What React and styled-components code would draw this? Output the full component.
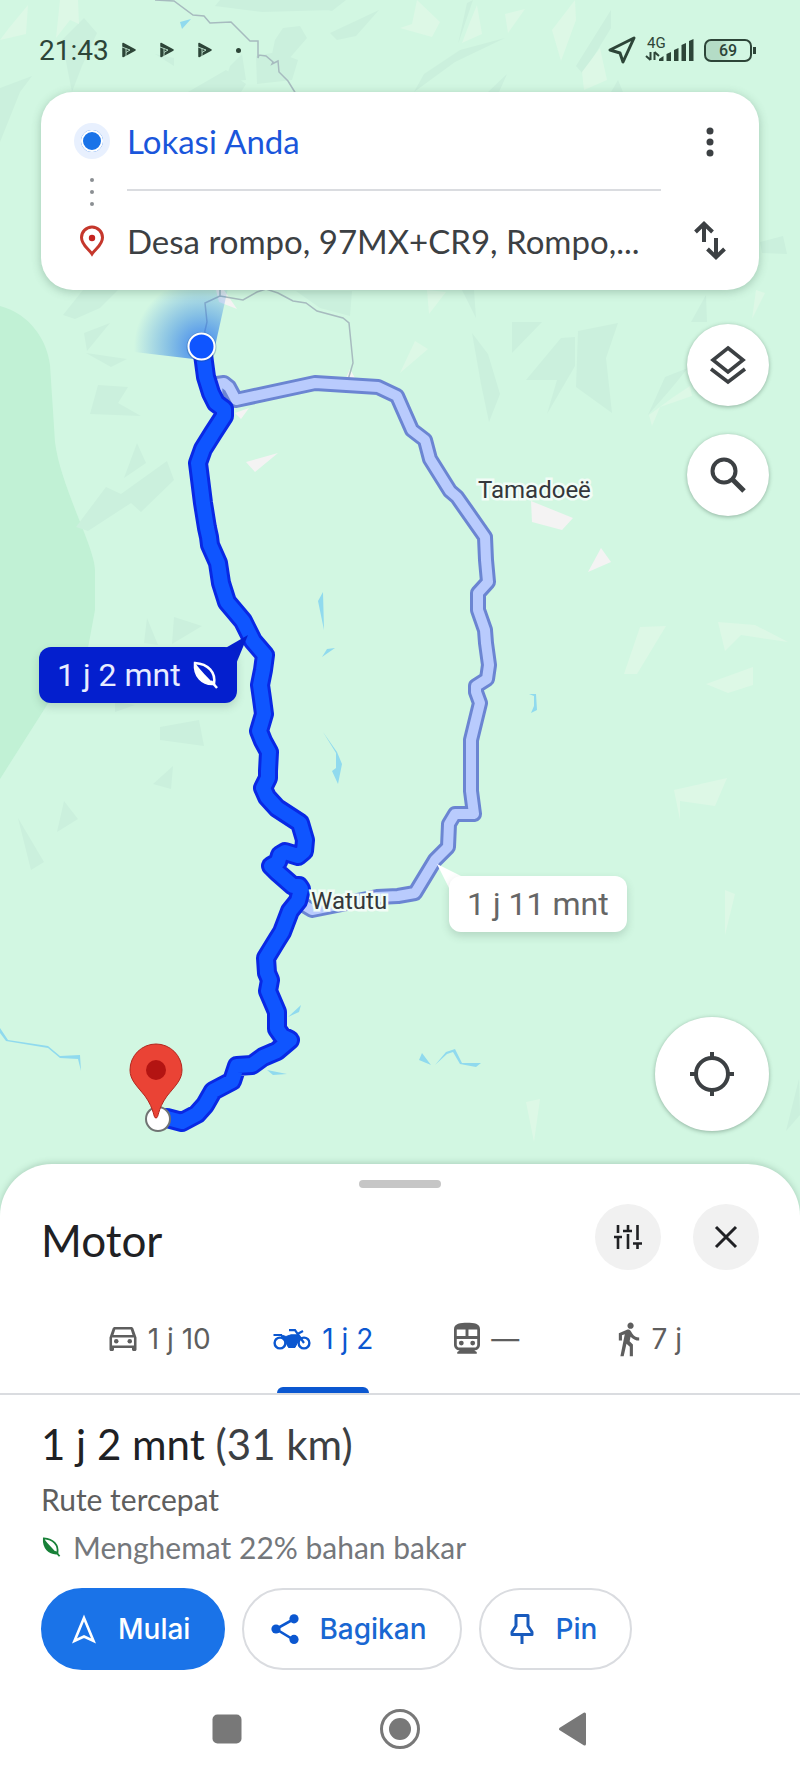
import styled, { createGlobalStyle, css } from 'styled-components';

const modes = [
  { id: 'car', label: 'Mobil', time: '1 j 10', icon: <CarIcon /> },
  { id: 'motor', label: 'Motor', time: '1 j 2', icon: <MotorIcon />, active: true },
  { id: 'transit', label: 'Transportasi umum', time: '—', icon: <TransitIcon /> },
  { id: 'walk', label: 'Jalan kaki', time: '7 j', icon: <WalkIcon /> },
];

const mainRoute =
  'M202 347L204 362L206 377L211 393L216 403L224 409L224 416L213 433L203 449L198 463L203 503L207 528L209 537L210 545L218 563L221 583L227 602L243 621L253 641L265 655L263 670L260 685L262 699L264 714L259 731L263 741L269 752L268 771L268 778L263 788L267 797L277 808L300 823L305 840L304 851L298 856L285 852L280 855L278 862L271 866L277 872L293 886L299 886L301 889L298 901L290 911L282 932L277 940L266 958L267 973L270 980L268 991L277 1012L277 1029L282 1036L290 1040L277 1051L263 1057L252 1065L237 1066L232 1081L213 1091L205 1105L197 1114L182 1122L167 1118';

const otherRoute =
  'M218 405L217 384L224 383L229 387L236 400L315 383L378 387L397 396L412 430L425 440L430 459L450 491L457 497L485 537L486 560L488 582L478 593L478 610L485 630L486 643L489 665L487 679L476 686L476 692L480 703L471 740L471 791L474 814L455 814L449 824L448 847L435 860L415 893L398 896L377 897L312 910L302 904';

const terrain = {
  dark: [
    'M220 0H338L332 10L262 12L215 6Z',
    'M280 0L346 0L332 11Z',
    'M283 28L300 26L307 38L288 60L272 54L275 40Z',
    'M330 33L362 18L379 10L356 36L337 40Z',
    'M256 56L277 52L298 60L292 80L257 84Z',
    'M242 54L246 80L225 82L230 66Z',
    'M188 92L226 70L246 84L241 92Z',
    'M62 40L84 18L97 33L82 66L72 92L68 72Z',
    'M155 54L174 58L174 66Z',
    'M0 88L32 76L20 92L0 142Z',
    'M424 74L460 50L505 38L455 62L414 92Z',
    'M458 44L467 3L473 0Z',
    'M576 66L611 10L611 28L583 74Z',
    'M488 92L507 74L499 92Z',
    'M611 92L618 80L623 92Z',
    'M760 242L783 236L787 254L762 253Z',
    'M83 290L118 290L100 308L75 319L63 315Z',
    'M84 333L110 323L87 351Z',
    'M86 353L127 359L111 367Z',
    'M98 385L128 387L118 403L141 416L90 414Z',
    'M137 443L146 463L124 478Z',
    'M106 487L121 494L167 461L174 480L141 512L131 503L88 531L76 527Z',
    'M147 618L158 645L144 643Z',
    'M174 617L202 626L172 644Z',
    'M296 291L352 291L350 316L320 308Z',
    'M462 290L474 290L476 318Z',
    'M512 322L542 322L512 353Z',
    'M472 333L488 354L500 394L489 422L481 384Z',
    'M561 338L575 337L575 366L547 414L557 380L526 380Z',
    'M578 331L618 323L606 358L612 413L576 387Z',
    'M706 295L707 322L691 322Z',
    'M665 377L688 368L670 390L648 415Z',
    'M160 727L199 720L204 746L160 740Z',
    'M153 784L173 766L171 789Z',
    'M64 801L78 819L57 832Z',
    'M18 818L44 862L31 870Z',
    'M115 702L135 705L115 712Z',
    'M799 1079L786 1131L800 1115Z',
  ],
  light: [
    'M9 28L28 5L26 34L0 40Z',
    'M60 0L78 0L79 24L70 20L56 38Z',
    'M400 28L412 24L417 0L440 22L432 37Z',
    'M505 14L525 9L508 33Z',
    'M552 30L575 0L576 20L561 61Z',
    'M470 22L477 5L482 34L462 43Z',
    'M582 72L600 48L607 80L584 90Z',
    'M427 290L446 292L429 314Z',
    'M415 341L428 349L400 373Z',
    'M756 290L765 293L752 319Z',
    'M672 398L690 386L692 396L660 407L652 426L649 415Z',
    'M640 627L666 626L637 674L624 674Z',
    'M718 622L755 625L788 642L741 635L725 651Z',
    'M706 684L753 667L753 685L728 693Z',
    'M674 790L727 778L715 806L680 801L680 820Z',
    'M725 890L735 894L725 935Z',
    'M526 1102L540 1099L534 1142Z',
  ],
  town: [
    'M246 462L278 453L255 472Z',
    'M235 413L249 408L241 419Z',
    'M216 290L224 290L237 309L219 302Z',
    'M531 501L532 522L562 530L573 518Z',
    'M601 548L611 562L588 572Z',
    'M346 378L350 369L355 378Z',
  ],
  water: [
    'M180 22L191 19L182 29Z',
    'M318 601L323 592L324 630Z',
    'M322 657L327 649L335 648Z',
    'M323 732L337 752L342 764L338 784L332 771L336 768L336 753Z',
    'M529 694L536 694L537 710L531 713L534 706L534 696Z',
    'M288 1017L301 1005L299 1012Z',
    'M267 1070L287 1074L273 1075Z',
    'M0 1028L8 1040L48 1046L60 1056L80 1055L81 1071L78 1059L60 1058L48 1048L6 1041L0 1033Z',
    'M419 1060L422 1053L431 1065Z',
    'M435 1065L446 1052L455 1049L462 1063L481 1063L476 1067L460 1064L453 1052L447 1054Z',
  ],
};

export default function App() {
  return (
    <Screen>
      <GlobalStyle />
      <MapArea>
        <RouteMap />
        <StatusBar>
          <Clock>21:43</Clock>
          <Notices>
            <AppMark />
            <AppMark />
            <AppMark />
            <Dot $size="5px" $color="#2d4538" />
          </Notices>
          <Signals>
            <SignalIcons />
            <Battery>69</Battery>
          </Signals>
        </StatusBar>
        <StopsCard>
          <Markers>
            <StartMarker />
            <Trail>
              <Dot $size="4px" $color="#8b8f93" />
              <Dot $size="4px" $color="#8b8f93" />
              <Dot $size="4px" $color="#8b8f93" />
            </Trail>
            <PlaceIcon />
          </Markers>
          <Fields>
            <StopInput $start aria-label="Titik awal" defaultValue="Lokasi Anda" />
            <StopInput aria-label="Tujuan" defaultValue="Desa rompo, 97MX+CR9, Rompo,..." />
          </Fields>
          <CardActions>
            <PlainButton aria-label="Opsi lainnya">
              <svg width="8" height="30" viewBox="0 0 8 30" fill="#3c4043">
                <circle cx="4" cy="4" r="3.5" />
                <circle cx="4" cy="15" r="3.5" />
                <circle cx="4" cy="26" r="3.5" />
              </svg>
            </PlainButton>
            <PlainButton aria-label="Tukar titik awal dan tujuan">
              <svg width="32" height="40" viewBox="0 0 32 40" fill="none" stroke="#3c4043" strokeWidth="4">
                <path d="M10 21V3M1.5 11L10 2.8L18.5 11M22 17V36M13.5 28L22 36.2L30.5 28" />
              </svg>
            </PlainButton>
          </CardActions>
        </StopsCard>
        <MapControls>
          <RoundButton aria-label="Lapisan peta">
            <svg width="38" height="40" viewBox="0 0 38 40" fill="none" stroke="#3c4043" strokeWidth="3.6">
              <path d="M19 3L34 15L19 27L4 15Z" />
              <path d="M2 24L19 37L36 24" />
            </svg>
          </RoundButton>
          <RoundButton aria-label="Telusuri">
            <svg width="38" height="38" viewBox="0 0 38 38" fill="none" stroke="#3c4043" strokeWidth="4">
              <circle cx="15" cy="15" r="11.5" />
              <path d="M23 23L35 35" strokeWidth="5" />
            </svg>
          </RoundButton>
          <RoundButton $large aria-label="Lokasi saya">
            <svg width="46" height="46" viewBox="0 0 46 46" fill="none" stroke="#3c4043" strokeWidth="4">
              <circle cx="23" cy="23" r="16" />
              <path d="M23 1V8M23 38V45M1 23H8M38 23H45" />
            </svg>
          </RoundButton>
        </MapControls>
      </MapArea>

      <Sheet>
        <Handle />
        <SheetHeader>
          <Title>Motor</Title>
          <HeaderButton aria-label="Opsi rute">
            <svg width="28" height="26" viewBox="0 0 28 26" fill="none" stroke="#202124" strokeWidth="2.6">
              <path d="M4 1V9M0 13H8M4 13V25M14 1V7M9 7H18M14 10V25M23.5 1V16M19 19.5H28M23.5 19.5V25" />
            </svg>
          </HeaderButton>
          <HeaderButton aria-label="Tutup">
            <svg width="24" height="24" viewBox="0 0 24 24" fill="none" stroke="#202124" strokeWidth="3">
              <path d="M2 2L22 22M22 2L2 22" />
            </svg>
          </HeaderButton>
        </SheetHeader>
        <Tabs role="tablist">
          {modes.map((mode) => (
            <Tab key={mode.id} role="tab" title={mode.label} aria-selected={!!mode.active} $active={mode.active}>
              {mode.icon}
              {mode.time}
            </Tab>
          ))}
        </Tabs>
        <Summary>
          <Duration>
            1 j 2 mnt <span>(31 km)</span>
          </Duration>
          <Note>Rute tercepat</Note>
          <Note $pale>
            <LeafIcon size={20} color="#188038" />
            Menghemat 22% bahan bakar
          </Note>
        </Summary>
        <Actions>
          <ActionButton $primary>
            <svg width="28" height="30" viewBox="0 0 28 30" fill="none" stroke="#fff" strokeWidth="2.6">
              <path d="M14 4L23.5 27L14 22.5L4.5 27Z" />
            </svg>
            Mulai
          </ActionButton>
          <ActionButton>
            <svg width="28" height="30" viewBox="0 0 28 30" fill="#0b57d0">
              <path d="M23 5L5 15L23 26" fill="none" stroke="#0b57d0" strokeWidth="2.6" />
              <circle cx="23" cy="4.8" r="4.6" />
              <circle cx="5" cy="15" r="4.6" />
              <circle cx="23" cy="25.4" r="4.6" />
            </svg>
            Bagikan
          </ActionButton>
          <ActionButton>
            <svg width="28" height="30" viewBox="0 0 28 30" fill="none" stroke="#185abc" strokeWidth="3">
              <path d="M8 1.5H20V12L24 18V20.5H4V18L8 12ZM14 20V30" strokeLinejoin="round" />
            </svg>
            Pin
          </ActionButton>
        </Actions>
        <SystemNav>
          <PlainButton aria-label="Terbaru">
            <svg width="42" height="42" viewBox="0 0 42 42">
              <rect x="6.5" y="6.5" width="29" height="29" rx="5" fill="#787878" />
            </svg>
          </PlainButton>
          <PlainButton aria-label="Layar utama">
            <svg width="42" height="42" viewBox="0 0 42 42">
              <circle cx="21" cy="21" r="18.5" fill="none" stroke="#787878" strokeWidth="3" />
              <circle cx="21" cy="21" r="11" fill="#787878" />
            </svg>
          </PlainButton>
          <PlainButton aria-label="Kembali">
            <svg width="42" height="42" viewBox="0 0 42 42" fill="#787878" stroke="#787878" strokeWidth="3" strokeLinejoin="round">
              <path d="M8.5 21L32.5 6V36Z" />
            </svg>
          </PlainButton>
        </SystemNav>
      </Sheet>
    </Screen>
  );
}

function RouteMap() {
  return (
    <MapCanvas>
      <svg width="800" height="1220" viewBox="0 0 800 1220" fill="none" aria-hidden="true">
        <defs>
          <radialGradient id="beam" gradientUnits="userSpaceOnUse" cx="202" cy="347" r="68">
            <stop offset="0" stopColor="#1a66f5" stopOpacity="0.8" />
            <stop offset="0.5" stopColor="#1a73e8" stopOpacity="0.4" />
            <stop offset="1" stopColor="#1a73e8" stopOpacity="0" />
          </radialGradient>
        </defs>
        <path
          d="M0 306C30 314 47 340 50 365L55 442C60 485 95 548 95 570V610L88 648L47 705L0 779Z"
          fill="#c1f1d5"
        />
        <path d={terrain.dark.join('')} fill="#cbf0dd" />
        <path d={terrain.light.join('')} fill="#ddf8e6" />
        <path d={terrain.town.join('')} fill="#f4f3f3" />
        <path d={terrain.water.join('')} fill="#90daee" />
        <path
          d="M155 0L174 1L193 15L204 16L210 23L231 22L250 41H258V58L259 55L266 56L273 62L272 64L278 61L279 72L288 81L296 94M220 285V296L205 303L207 322L204 335M220 296L243 300L257 292L266 289L278 293L293 301L306 303L317 311L343 318L349 323L353 363L348 380"
          stroke="#a7bbbf"
          strokeWidth="1.5"
        />
        <path d="M202 360L126 351V270H232L212 360Z" fill="url(#beam)" />
        <g strokeLinejoin="round" strokeLinecap="round">
          <path d={otherRoute} stroke="#6b85d2" strokeWidth="16" />
          <path d={otherRoute} stroke="#b9cbfd" strokeWidth="10" />
          <path d={mainRoute} stroke="#0928e4" strokeWidth="20" />
          <path d={mainRoute} stroke="#0f55ff" strokeWidth="14" />
        </g>
        <circle cx="201.5" cy="347" r="15" fill="#1b4a80" opacity="0.3" />
        <circle cx="201.5" cy="346.5" r="13" fill="#0f55ff" stroke="#fff" strokeWidth="2" />
        <circle cx="158" cy="1119" r="12" fill="#fff" stroke="#707473" strokeWidth="2" />
        <path
          d="M156 1118C153 1118 155 1110 145 1096C137 1086 130 1080 130 1070A26 26 0 0 1 182 1070C182 1080 175 1086 167 1096C157 1110 159 1118 156 1118Z"
          fill="#ea4335"
          stroke="#b3261e"
        />
        <circle cx="156" cy="1070" r="10" fill="#b31412" />
        <path d="M222 650L248 635L236 664Z" fill="#041fce" />
        <path d="M465 878L437 864L451 892Z" fill="#fff" />
      </svg>
      <PlaceName $x="478px" $y="475px">Tamadoeë</PlaceName>
      <PlaceName $x="311px" $y="886px">Watutu</PlaceName>
      <Callout $x="39px" $y="647px" $selected>
        1 j 2 mnt
        <LeafIcon size={28} color="#fff" />
      </Callout>
      <Callout $x="449px" $y="876px">1 j 11 mnt</Callout>
    </MapCanvas>
  );
}

function AppMark() {
  return (
    <svg width="14" height="16" viewBox="0 0 14 16">
      <path d="M1 1.500L13 8L1 14.500Z" fill="#2d4538" stroke="#2d4538" strokeWidth="1.500" strokeLinejoin="round" />
      <path d="M0 5L8 8L4 10.500V15M4 10.500V6.500" fill="none" stroke="#d2f7e2" strokeWidth="0.8" />
    </svg>
  );
}

function SignalIcons() {
  return (
    <svg width="86" height="32" viewBox="0 0 86 32" fill="#2d4538">
      <path d="M2 16L26 4L15 28L12 19Z" fill="none" stroke="#2d4538" strokeWidth="3" strokeLinejoin="round" />
      <text x="39" y="14" fontSize="15" fontFamily="Roboto, sans-serif">
        4G
      </text>
      <path d="M42.500 18V26M38 22L42.500 26M46.500 26V18M51 22L46.500 18" fill="none" stroke="#2d4538" strokeWidth="2" />
      <path d="M51 27V25L55.500 22V27ZM58.500 20L63 18V27H58.500ZM66 16L70.500 14V27H66ZM73.500 11L78 9V27H73.500ZM81 7L85.500 5V27H81Z" />
    </svg>
  );
}

function PlaceIcon() {
  return (
    <svg width="26" height="32" viewBox="0 0 26 32" fill="none">
      <path
        d="M13 29C9 23 2.500 20 2.500 12.500A10.500 10.500 0 0 1 23.500 12.500C23.500 20 17 23 13 29Z"
        stroke="#c5372c"
        strokeWidth="3"
      />
      <circle cx="13" cy="13" r="3.200" fill="#c5221f" />
    </svg>
  );
}

function LeafIcon({ size, color }) {
  return (
    <svg width={size} height={size} viewBox="0 0 28 28" fill="none">
      <path d="M4 2C17 3 25 11 23 23C11 24 3 15 4 2Z" stroke={color} strokeWidth="2.500" />
      <path d="M4 2C10 10 17 17 23 23C11 24 3 15 4 2Z" fill={color} />
      <path d="M20 20L26 27" stroke={color} strokeWidth="2.500" />
    </svg>
  );
}

function CarIcon() {
  return (
    <svg width="28" height="36" viewBox="3 0 18 24" fill="currentColor">
      <path d="M18.920 5.010C18.720 4.420 18.160 4 17.500 4h-11c-.66 0-1.210.42-1.420 1.010L3 11v8c0 .55.45 1 1 1h1c.55 0 1-.45 1-1v-1h12v1c0 .55.45 1 1 1h1c.55 0 1-.45 1-1v-8l-2.080-5.990zM6.850 5.600h10.290l1.200 3.800H5.650l1.200-3.800zM19.300 16.300H4.700v-5.300h14.600v5.300z" />
      <circle cx="7.500" cy="13.500" r="1.500" />
      <circle cx="16.500" cy="13.500" r="1.500" />
    </svg>
  );
}

function MotorIcon() {
  return (
    <svg width="38" height="24" viewBox="0 0 38 24" fill="none" stroke="currentColor" strokeWidth="2.400">
      <circle cx="7" cy="16" r="5.400" />
      <circle cx="31" cy="16" r="5.400" />
      <path d="M0.500 8H9M16 3.200H22L31 16M24.500 7L30 4" strokeWidth="2.200" />
      <path d="M7 7.500L13 9.500L18 7.800H24.500L27 10.500L22 20.500H15.500L12 14Z" fill="currentColor" strokeWidth="1" />
    </svg>
  );
}

function TransitIcon() {
  return (
    <svg width="26" height="36" viewBox="4 1 16 22" fill="currentColor">
      <path
        fillRule="evenodd"
        d="M12 2C8 2 4 2.500 4 6v9.500C4 17.430 5.570 19 7.500 19L6 20v1h12v-1l-1.500-1c1.930 0 3.500-1.570 3.500-3.500V6C20 2.500 16.420 2 12 2ZM5.700 6.200H11.100V10.200H5.700ZM12.900 6.200H18.300V10.200H12.900ZM5.700 12H18.300V15.500C18.300 16.500 17.600 17.300 16.500 17.300H7.500C6.400 17.300 5.700 16.500 5.700 15.500Z"
      />
      <circle cx="8.500" cy="14.500" r="1.500" />
      <circle cx="15.500" cy="14.500" r="1.500" />
    </svg>
  );
}

function WalkIcon() {
  return (
    <svg width="22" height="36" viewBox="5.500 0.500 14 23" fill="currentColor">
      <path d="M13.500 5.500c1.100 0 2-.9 2-2s-.9-2-2-2-2 .9-2 2 .9 2 2 2zM9.800 8.900L7 23h2.100l1.800-8 2.100 2v6h2v-7.500l-2.100-2 .6-3C14.800 12 16.800 13 19 13v-2c-1.900 0-3.500-1-4.300-2.400l-1-1.600c-.4-.6-1-1-1.700-1-.3 0-.5.1-.8.1L6 8.300V13h2V9.600l1.800-.7" />
    </svg>
  );
}

const GlobalStyle = createGlobalStyle`
  * {
    box-sizing: border-box;
  }
  body {
    margin: 0;
    background-color: #fff;
    font-family: 'Lato', sans-serif;
  }
  button,
  input {
    margin: 0;
    padding: 0;
    border: none;
    background: none;
    font-family: inherit;
  }
  svg {
    flex-shrink: 0;
  }
`;

const Screen = styled.div`
  min-height: 100vh;
  display: flex;
  flex-direction: column;
`;

const MapArea = styled.main`
  position: relative;
  flex: 1;
  display: flex;
  flex-direction: column;
  padding-bottom: 89px;
  overflow: hidden;
  background-color: #d2f7e2;
`;

const MapCanvas = styled.div`
  position: absolute;
  top: 0;
  left: 50%;
  width: 800px;
  margin-left: -400px;
`;

const PlaceName = styled.span`
  position: absolute;
  left: ${(props) => props.$x};
  top: ${(props) => props.$y};
  color: #34373b;
  font-family: 'Roboto', sans-serif;
  font-size: 24px;
  line-height: 30px;
  -webkit-text-stroke: 5px #f1fcf6;
  paint-order: stroke fill;
`;

const Callout = styled.div`
  position: absolute;
  left: ${(props) => props.$x};
  top: ${(props) => props.$y};
  display: flex;
  align-items: center;
  gap: 10px;
  height: 56px;
  padding: 0 18px;
  border-radius: 12px;
  white-space: nowrap;
  font-family: 'Roboto', sans-serif;
  font-size: 32px;
  color: ${(props) => (props.$selected ? '#e8ecff' : '#666')};
  background-color: ${(props) => (props.$selected ? '#041fce' : '#fff')};
  box-shadow: 0 4px 8px rgba(60, 90, 75, 0.2);
`;

const StatusBar = styled.header`
  position: relative;
  display: flex;
  align-items: center;
  height: 92px;
  padding: 8px 48px 0 39px;
  font-family: 'Roboto', sans-serif;
  color: #2d4538;
`;

const Clock = styled.time`
  font-size: 28px;
`;

const Notices = styled.div`
  display: flex;
  align-items: center;
  gap: 24px;
  margin-left: 13px;
`;

const Signals = styled.div`
  display: flex;
  align-items: center;
  gap: 10px;
  margin-left: auto;
`;

const Battery = styled.span`
  position: relative;
  width: 48px;
  height: 23px;
  border: 2px solid #2d4538;
  border-radius: 7px;
  background: linear-gradient(90deg, #b4dcc6 30%, transparent 60%);
  text-align: center;
  font-size: 16px;
  font-weight: 500;
  line-height: 19px;
  &::after {
    content: '';
    position: absolute;
    top: 6px;
    right: -6px;
    width: 3px;
    height: 7px;
    background-color: #2d4538;
  }
`;

const Dot = styled.i`
  width: ${(props) => props.$size};
  height: ${(props) => props.$size};
  border-radius: 50%;
  background-color: ${(props) => props.$color};
`;

const StopsCard = styled.section`
  position: relative;
  display: grid;
  grid-template-columns: 70px 1fr 98px;
  height: 198px;
  margin: 0 41px;
  padding-left: 16px;
  border-radius: 32px;
  background-color: #fff;
  box-shadow: 0 2px 10px rgba(50, 90, 70, 0.3);
`;

const Markers = styled.div`
  display: flex;
  flex-direction: column;
  align-items: center;
  justify-content: space-between;
  padding: 31px 0 33px;
`;

const StartMarker = styled.span`
  width: 36px;
  height: 36px;
  border: 7px solid #e8f0fe;
  border-radius: 50%;
  background-color: #1a73e8;
  box-shadow: inset 0 0 0 2px #fff;
`;

const Trail = styled.div`
  display: flex;
  flex-direction: column;
  gap: 8px;
`;

const Fields = styled.div`
  display: grid;
  grid-template-rows: 1fr 1fr;
  min-width: 0;
`;

const StopInput = styled.input`
  width: 100%;
  min-width: 0;
  color: #3c4043;
  font-size: 33px;
  outline: none;
  ${(props) =>
    props.$start &&
    css`
      color: #1a56db;
      border-bottom: 2px solid #dadce0;
    `}
`;

const CardActions = styled.div`
  display: grid;
  grid-template-rows: 1fr 1fr;
`;

const PlainButton = styled.button`
  display: flex;
  align-items: center;
  justify-content: center;
`;

const MapControls = styled.div`
  position: relative;
  flex: 1;
  display: flex;
  flex-direction: column;
  align-items: flex-end;
  gap: 28px;
  padding: 34px 31px 0;
`;

const RoundButton = styled(PlainButton)`
  width: ${(props) => (props.$large ? '114px' : '82px')};
  height: ${(props) => (props.$large ? '114px' : '82px')};
  margin-top: ${(props) => (props.$large ? 'auto' : '0')};
  border-radius: 50%;
  background-color: #fff;
  box-shadow: 0 1px 4px rgba(40, 70, 55, 0.4);
`;

const Sheet = styled.section`
  position: relative;
  display: flex;
  flex-direction: column;
  margin-top: -56px;
  padding-top: 16px;
  border-radius: 52px 52px 0 0;
  background-color: #fff;
  box-shadow: 0 -1px 6px rgba(50, 90, 70, 0.25);
`;

const Handle = styled.div`
  align-self: center;
  width: 82px;
  height: 8px;
  border-radius: 4px;
  background-color: #c6c6c6;
`;

const SheetHeader = styled.div`
  display: flex;
  align-items: center;
  gap: 32px;
  padding: 16px 41px 0;
`;

const Title = styled.h1`
  flex: 1;
  margin: 0;
  padding-top: 6px;
  color: #202124;
  font-size: 44px;
  font-weight: 400;
  line-height: 60px;
`;

const HeaderButton = styled(PlainButton)`
  width: 66px;
  height: 66px;
  border-radius: 50%;
  background-color: #f1f1f1;
`;

const Tabs = styled.div`
  display: grid;
  grid-template-columns: repeat(4, 1fr);
  height: 112px;
  margin-top: 13px;
  padding: 0 68px 0 78px;
  border-bottom: 2px solid #dadce0;
`;

const Tab = styled.button`
  position: relative;
  display: flex;
  align-items: center;
  justify-content: center;
  gap: 11px;
  padding-top: 2px;
  color: ${(props) => (props.$active ? '#0b57d0' : '#5e5e5e')};
  font-family: 'Inter', sans-serif;
  font-size: 28px;
  ${(props) =>
    props.$active &&
    css`
      &::after {
        content: '';
        position: absolute;
        bottom: 0;
        left: 50%;
        width: 92px;
        height: 6px;
        margin-left: -46px;
        border-radius: 6px 6px 0 0;
        background-color: #0b57d0;
      }
    `}
`;

const Summary = styled.div`
  padding: 21px 41px 0;
`;

const Duration = styled.h2`
  margin: 0 0 3px;
  color: #202124;
  font-size: 42px;
  font-weight: 400;
  line-height: 56px;
  span {
    color: #3c4043;
  }
`;

const Note = styled.p`
  display: flex;
  align-items: center;
  gap: 12px;
  margin: 0;
  color: ${(props) => (props.$pale ? '#74777b' : '#5e5e5e')};
  font-size: 30px;
  line-height: 48px;
`;

const Actions = styled.div`
  display: flex;
  gap: 17px;
  padding: 17px 41px 0;
`;

const ActionButton = styled.button`
  display: flex;
  align-items: center;
  gap: 20px;
  height: 82px;
  padding: 0 33px 0 27px;
  border: 2px solid ${(props) => (props.$primary ? '#1a73e8' : '#dadce0')};
  border-radius: 41px;
  color: ${(props) => (props.$primary ? '#fff' : '#1967d2')};
  background-color: ${(props) => (props.$primary ? '#1a73e8' : '#fff')};
  font-family: 'Inter', sans-serif;
  font-size: 28px;
  font-weight: 500;
`;

const SystemNav = styled.nav`
  display: flex;
  align-items: center;
  justify-content: center;
  gap: 131px;
  height: 98px;
  margin-top: 10px;
`;
